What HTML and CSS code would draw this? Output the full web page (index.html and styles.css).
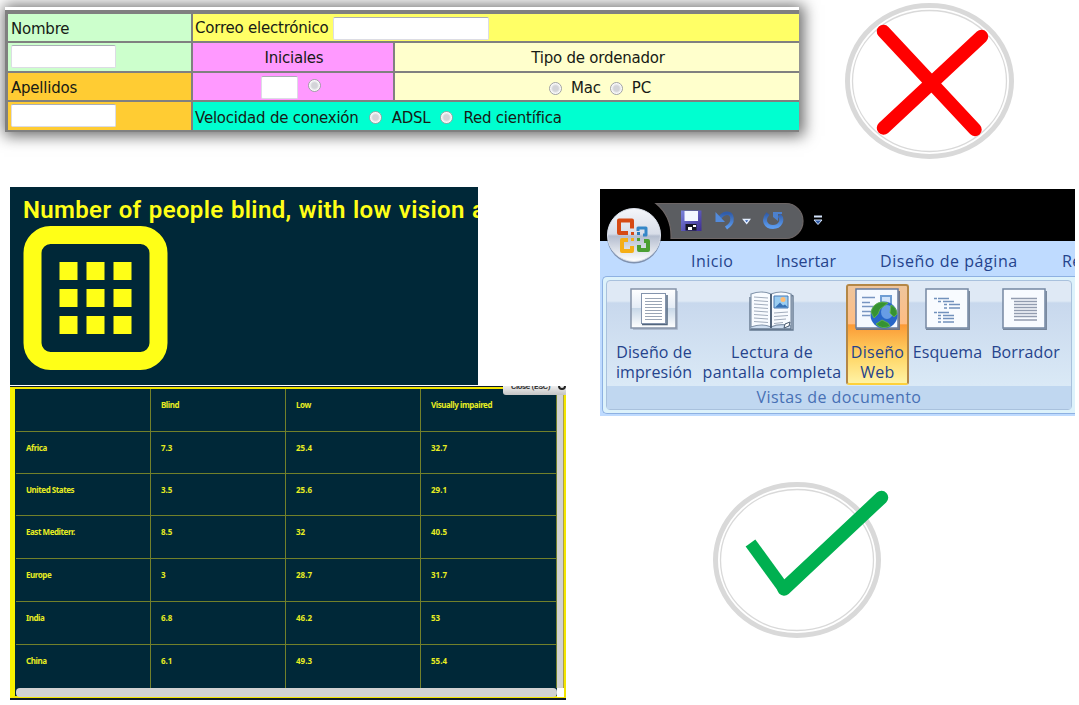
FILE: index.html
```html
<!DOCTYPE html>
<html lang="es">
<head>
<meta charset="utf-8">
<title>Ejemplos de interfaz</title>
<link rel="stylesheet" href="styles.css">
</head>
<body>
<div class="top">
  <div class="form">
    <div class="form-left">
      <div class="cell green">Nombre</div>
      <div class="cell green"><span class="field w105"></span></div>
      <div class="cell orange">Apellidos</div>
      <div class="cell orange"><span class="field w105"></span></div>
    </div>
    <div class="form-right">
      <div class="cell yellow full mail">Correo electrónico <span class="field w156"></span></div>
      <div class="cell pink mid">Iniciales</div>
      <div class="cell cream mid">Tipo de ordenador</div>
      <div class="cell pink mid initials"><span class="field w36"></span><i class="radio"></i></div>
      <div class="cell cream mid kind"><i class="radio"></i><span>Mac</span><i class="radio"></i><span>PC</span></div>
      <div class="cell teal full speed"><span>Velocidad de conexión</span><i class="radio"></i><span>ADSL</span><i class="radio"></i><span>Red científica</span></div>
    </div>
  </div>
  <svg class="mark" width="180" height="170" viewBox="840 0 180 170">
    <g fill="none" stroke="#d9d9d9"><ellipse cx="929.5" cy="81" rx="82" ry="75.5" stroke-width="5"/><ellipse cx="929.5" cy="81" rx="77" ry="70.5" stroke-width="1.3"/></g>
    <path d="M883.5 31.5L975 129.500M981.500 36.500L883.500 128" stroke="#f00" stroke-width="13.500" stroke-linecap="round"/>
  </svg>
</div>
<div class="main">
  <div class="left">
    <div class="chart">
      <h1>Number of people blind, with low vision a</h1>
      <svg width="145" height="145" viewBox="0 0 145 145">
        <rect x="9.500" y="9" width="126" height="126" rx="18" fill="none" stroke="#ffff17" stroke-width="18"/>
        <path fill="#ffff17" d="M36.500 36h18v18h-18zM63.500 36h18v18h-18zM90.500 36h18v18h-18zM36.500 63h18v18h-18zM63.500 63h18v18h-18zM90.500 63h18v18h-18zM36.500 90h18v18h-18zM63.500 90h18v18h-18zM90.500 90h18v18h-18z"/>
      </svg>
    </div>
    <div class="data">
      <div class="frame">
        <div class="grid">
          <b></b><b>Blind</b><b>Low</b><b>Visually impaired</b>
          <b>Africa</b><b>7.3</b><b>25.4</b><b>32.7</b>
          <b>United States</b><b>3.5</b><b>25.6</b><b>29.1</b>
          <b>East Mediterr.</b><b>8.5</b><b>32</b><b>40.5</b>
          <b>Europe</b><b>3</b><b>28.7</b><b>31.7</b>
          <b>India</b><b>6.8</b><b>46.2</b><b>53</b>
          <b>China</b><b>6.1</b><b>49.3</b><b>55.4</b>
        </div>
        <div class="vbar"></div>
        <div class="hbar"></div>
        <div class="corner"></div>
      </div>
      <div class="close"><span>Close (ESC)</span><i></i></div>
    </div>
  </div>
  <div class="right">
    <div class="ribbon">
      <svg class="titlebar" width="475" height="52" viewBox="600 189 475 52">
        <defs>
          <linearGradient id="disk" x2="1" y2="1"><stop stop-color="#7a83dc"/><stop offset="1" stop-color="#3d2c92"/></linearGradient>
          <linearGradient id="arrow" x2="0" y2="1"><stop stop-color="#315ca8"/><stop offset="1" stop-color="#5c9bed"/></linearGradient>
        </defs>
        <path fill="#000" d="M600 189h475v52H600z"/>
        <path d="M656 203.500H786a17 17.500 0 0 1 0 35H671q1-22-15-35z" fill="#5b5d61" stroke="#6d6666" stroke-width="1.200"/>
        <path d="M681 210.500h20.500v20.500H681z" fill="url(#disk)"/>
        <path d="M684.500 211h13.500v10h-13.500z" fill="#f4f7ff"/><path d="M685.500 224h11v6.500h-11z" fill="#151424"/><path d="M688 227h4v3h-4zM693 225h3v2h-3z" fill="#fff"/>
        <path d="M719 219c4-7 12-8 13-1 .5 5-2 7-6 10" fill="none" stroke="url(#arrow)" stroke-width="3.500"/><path d="M715.500 212v10h9.500z" fill="#538bdc"/>
        <path d="M768 213.500c-6 7-2 13.500 5 13.500s11-7 6-12" fill="none" stroke="url(#arrow)" stroke-width="4"/><path d="M773 212h9v2h-4v7l-5-4z" fill="#4c80cd"/>
        <path d="M743.500 219.500l3.200 4 3-4z" fill="#305dae" stroke="#e3eeff" stroke-width="1.300"/>
        <path d="M814 216.500h8" stroke="#d5e4fb" stroke-width="2"/><path d="M814 220h8l-4 4.500z" fill="#315ca8" stroke="#d5e4fb"/>
      </svg>
      <div class="tabs"><span>Inicio</span><span>Insertar</span><span>Diseño de página</span><span>Re</span></div>
      <div class="panel">
        <div class="group">
          <div class="buttons">
            <div class="btn b1">
              <svg width="50" height="44" viewBox="0 0 50 44"><defs><linearGradient id="pg" x2="0" y2="1"><stop stop-color="#fff"/><stop offset=".5" stop-color="#e3ebf5"/><stop offset=".5" stop-color="#c8d8e8"/><stop offset="1" stop-color="#fff"/></linearGradient></defs><path d="M4 42h44V4" fill="none" stroke="#a3b0c3" stroke-width="1.500"/><rect x="2" y="2" width="45" height="39" fill="url(#pg)" stroke="#8593a8" stroke-width="1.500"/><path d="M13 37.500h25V8" fill="none" stroke="#52657d" stroke-width="1.500"/><rect x="12.500" y="6.500" width="24" height="30" fill="#fff" stroke="#8393ac"/><path d="M16 11.500h17M16 14.500h17M16 17.500h17M16 20.500h17M16 23.500h17M16 26.500h17M16 29.500h17M16 32.500h17" stroke="#9aa5b5" stroke-width="1.200"/></svg>
              <span>Diseño de<br>impresión</span>
            </div>
            <div class="btn b2">
              <svg width="50" height="44" viewBox="0 0 50 44"><path d="M3 10v33h43V9l-2-1v34H4" fill="#e4eefb" stroke="#667990" stroke-width="1.400"/><path d="M4 7q10-4 20 0v33q-9-4-20 0zM24 7q10-4 20 0v32q-11-3-20 1z" fill="#f8fbff" stroke="#8496ac" stroke-width="1.200"/><path d="M24 7v34" stroke="#44566d" stroke-width="1.700"/><path d="M7 10l14 1M7 13.500l14 1M7 17l14 1M7 20.500l14 1M7 24l14 1M7 27.500l14 1M7 31l14 1M7 34.500l14 1M27 26l14-1M27 29.500l14-1M27 33l12-1M27 36.500l9-1" stroke="#a1acbc" stroke-width="1"/><path d="M27 9h14v12H27z" fill="#9acdf2" stroke="#4a7bb3"/><path d="M28 20.500l5-5 3 3 2-1 3 3z" fill="#3973b6"/><circle cx="36" cy="12.500" r="2.500" fill="#ffbd75"/><path d="M37 41l1-4 5-2-1 4z" fill="#fff" stroke="#475a70"/></svg>
              <span>Lectura de<br>pantalla completa</span>
            </div>
            <div class="btn b3">
              <svg width="50" height="44" viewBox="0 0 50 44"><path d="M3 42.200h43.200V4" fill="none" stroke="#697184" stroke-width="1.500"/><rect x="3" y="2" width="42" height="39" fill="#f5f9ff" stroke="#667a9d" stroke-width="1.500"/><path d="M9 10.500h13M9 15.500h8M9 19.500h13M9 24.500h9M9 28.500h8" stroke="#7895c1" stroke-width="1.500"/><path d="M28 9h10v10H28z" fill="#cee2fa" stroke="#6e9dd4" stroke-width="2"/><circle cx="31" cy="28" r="13.500" fill="#2866c8"/><ellipse cx="34" cy="25" rx="6" ry="7" fill="#88baf5" opacity=".65"/><path d="M18 25q2-9 11-10l6 1-4 3-4 3-2 5-4 4zM38 18q6 3 6 9l-3 3-4-4zM23 37l6-4 6 3 2 3q-8 4-14-2z" fill="#369233" stroke="#69ba45" stroke-width=".8"/></svg>
              <span>Diseño<br>Web</span>
            </div>
            <div class="btn b4">
              <svg width="50" height="44" viewBox="0 0 50 44"><path d="M3 42.200h43.200V4" fill="none" stroke="#75859a" stroke-width="1.500"/><rect x="3" y="2" width="42" height="39" fill="#f8fbff" stroke="#7588a3" stroke-width="1.500"/><path d="M11 11.500h3M15 11.500h11M15 14.500h3M20 14.500h11M21 17.500h3M26 17.500h11M21 21h3M26 21h11M11 25.500h3M15 25.500h11M15 28.500h3M20 28.500h11M15 31.500h3M20 31.500h11M15 35h3M20 35h11" stroke="#7291bc" stroke-width="1.700"/></svg>
              <span>Esquema</span>
            </div>
            <div class="btn b5">
              <svg width="50" height="44" viewBox="0 0 50 44"><path d="M2 42.200h43.200V4" fill="none" stroke="#75859a" stroke-width="1.500"/><rect x="2" y="2" width="42" height="39" fill="#f8fbff" stroke="#7588a3" stroke-width="1.500"/><path d="M10 11.500h26M13 14.500h23M13 17.500h23M13 20.500h23M13 23.500h23M13 26.500h23M13 29.500h23M13 33h23" stroke="#929caf" stroke-width="1.500"/></svg>
              <span>Borrador</span>
            </div>
          </div>
          <div class="caption">Vistas de documento</div>
        </div>
      </div>
      <svg class="orb" width="60" height="62" viewBox="604 204 60 62">
        <defs><linearGradient id="orb" x2="0" y2="1"><stop stop-color="#f4f6fa"/><stop offset=".48" stop-color="#d8dde8"/><stop offset=".52" stop-color="#b4bdcf"/><stop offset="1" stop-color="#fff"/></linearGradient></defs>
        <circle cx="634" cy="236.500" r="27" fill="#56617a" opacity=".6"/><circle cx="634" cy="235" r="26.500" fill="url(#orb)" stroke="#d9dfe9"/>
        <g fill="none" stroke-width="4" stroke-linejoin="round"><path d="M628 233h-9v-12.500h13v8" stroke="#d64a14"/><path d="M638 231v-3h8v7h-3" stroke="#3487c8" stroke-width="3"/><path d="M628 240h-6v11h10v-5" stroke="#f5ae16"/><path d="M644 241h4v9h-9v-5" stroke="#4b9f32"/></g>
        <path d="M631 232h3v3h-3z" fill="#d64a14"/><path d="M637 232h3v3h-3z" fill="#287bb8"/><path d="M631 238h3v3h-3z" fill="#f5ae16"/><path d="M637 238h3v3h-3z" fill="#4b9f32"/>
      </svg>
    </div>
    <svg class="check" width="190" height="170" viewBox="705 474 190 170">
      <g fill="none" stroke="#d9d9d9"><ellipse cx="797" cy="560" rx="81.500" ry="75.500" stroke-width="5"/><ellipse cx="797" cy="560" rx="76.500" ry="70.500" stroke-width="1.300"/></g>
      <path d="M750.500 543L784 589" stroke="#00b050" stroke-width="12"/><path d="M784 589L881.500 497.500" stroke="#00b050" stroke-width="13.500" stroke-linecap="round"/>
    </svg>
  </div>
</div>
</body>
</html>
```

FILE: styles.css
```css
* { box-sizing: border-box; }
body { margin: 0; width: 1079px; height: 705px; overflow: hidden; background: #fff; }
svg { display: block; flex: none; }

.top { display: flex; height: 187px; padding-left: 5px; }
.form {
  display: flex; gap: 2px; width: 794px; height: 125px; margin-top: 7px; padding: 4px 0 3px 3px;
  border-top: 3px solid #fff; background: #808080; box-shadow: 2px 1px 14px 3px rgba(0, 0, 0, .58);
  font: 15px/27px "DejaVu Sans", sans-serif; letter-spacing: -.22px; color: #171b16;
}
.form-left { display: grid; grid-template-rows: 27px 28px 27px 28px; gap: 2px; width: 183px; }
.form-right { display: grid; grid-template: 27px 28px 27px 28px / 200px 404px; gap: 2px; }
.cell { display: flex; align-items: center; padding-left: 2px; white-space: pre; }
.form-left .cell { padding-left: 3px; }
.form-left .cell:nth-child(odd) { padding-top: 3px; }
.form-left .cell:nth-child(even), .initials { padding-bottom: 1px; }
.full { grid-column: 1 / 3; }
.mail { padding-top: 1px; }
.mid { justify-content: center; padding-top: 2px; }
.green { background: #cfc; }
.orange { background: #fc3; }
.yellow { background: #ff6; }
.pink { background: #f9f; }
.cream { background: #ffc; }
.teal { background: #00ffd0; }
.field { height: 23px; background: #fff; border: 1px solid #dcdce4; border-top-color: #aaaeb6; border-radius: 2px; }
.w105 { width: 105px; }
.w156 { width: 156px; }
.w36 { width: 37px; }
.radio { width: 13px; height: 13px; border-radius: 50%; border: 1px solid #a0a1a5; background: radial-gradient(circle, #d3d4d8 35%, #fff 68%); }
.cell.initials { gap: 10px; padding: 1px 4px 0 0; }
.initials .radio { margin-bottom: 3px; }
.cell.kind { gap: 9px; padding-top: 4px; padding-left: 6px; }
.speed { gap: 10px; padding-top: 4px; }
.speed .radio { margin-bottom: 2px; }
.mark { margin-left: 41px; }

.main { display: flex; height: 518px; padding-left: 10px; }
.left { width: 590px; }
.chart { width: 468px; height: 198px; padding: 8px 0 0 13px; overflow: hidden; background: #002838; }
h1 { margin: 0; height: 31px; font: 600 24px/31px Roboto, sans-serif; letter-spacing: .35px; word-spacing: 1px; white-space: nowrap; color: #ffff17; }
.data { position: relative; width: 556px; height: 314px; margin-top: 1px; padding-top: 1px; overflow: hidden; background: #101b28; }
.frame {
  display: grid; grid-template: 299px 9px / 541px 7px; height: 311px; padding-left: 1px;
  border: 2px solid #f3e500; border-left: 5px solid #f8f100; background: #002838;
}
.grid { display: grid; grid-template-columns: 135px 135px 135px 136px; grid-template-rows: 43px 42px 42px 43px 43px 43px 43px; }
.grid b {
  padding: 7px 0 0 10px; border-right: 1px solid #71802a; border-bottom: 1px solid #71802a;
  font: 700 8px/17px "Noto Sans", sans-serif; letter-spacing: -.45px; white-space: nowrap; color: #e7ed22;
}
.grid b:not(:nth-child(4n+1)):nth-child(n+5) { letter-spacing: 0; }
.grid b:nth-last-child(-n+4) { border-bottom: 0; }
.vbar { background: #d2d2d2; border-right: 1px solid #aaa04b; }
.hbar { background: #d2d2d2; border-radius: 4px; }
.corner { background: #fff; }
.close {
  position: absolute; left: 493px; top: 0; width: 63px; height: 9px; overflow: hidden;
  display: flex; border-radius: 0 0 0 3px; background: linear-gradient(#eee, #c4c4c4);
  font: 700 8px/9px Roboto, sans-serif; letter-spacing: -.3px; color: #333;
}
.close span { margin: -4px 0 0 8px; width: 49px; white-space: nowrap; }
.close i { flex: none; width: 8px; height: 8px; margin-top: -4px; border: 2px solid #222; border-radius: 50%; }

.right { width: 475px; padding-top: 2px; }
.ribbon { position: relative; width: 475px; height: 227px; overflow: hidden; background: #bfdbff; font: 16px/20px "Open Sans", sans-serif; letter-spacing: .1px; color: #25438c; }
.orb { position: absolute; left: 4px; top: 15px; }
.tabs { display: flex; height: 35px; padding: 10px 0 0 91px; letter-spacing: .45px; white-space: nowrap; }
.tabs span { flex: none; }
.tabs span:nth-child(1) { width: 85px; }
.tabs span:nth-child(2) { width: 104px; letter-spacing: .2px; }
.tabs span:nth-child(3) { width: 182px; letter-spacing: .55px; }
.panel { height: 138px; margin-left: 2px; padding: 3px 3px 4px; border: 1px solid #8eb1e2; border-right: 0; border-radius: 5px 0 0 5px; background: #ddf2fb; }
.group { height: 130px; border: 1px solid #a9c1dd; border-radius: 4px; background: linear-gradient(#dfe9f5 0 20px, #c8d8ed 22px, #dae9f6 104px); }
.buttons { display: flex; height: 105px; padding-left: 3px; }
.btn { flex: none; display: flex; flex-direction: column; align-items: center; height: 101px; margin-top: 3px; padding-top: 3px; text-align: center; white-space: nowrap; }
.btn span { margin-top: 11px; }
.b1 { width: 88px; }
.b2 { width: 148px; letter-spacing: .3px; }
.b3 { width: 63px; padding-top: 2px; border: 2px solid #b48746; border-bottom-color: #ffd13b; border-radius: 3px; background: linear-gradient(#eec59c, #ffbd83 39%, #fb9a36 40%, #ffd565 72%, #fff3a5); letter-spacing: .3px; }
.b3 svg { margin-top: -1px; }
.b4 { width: 77px; }
.b5 { width: 79px; }
.caption { height: 23px; line-height: 23px; text-align: center; letter-spacing: .45px; color: #4770b5; background: #c0d7f0; }
.check { margin: 58px 0 0 105px; }
```
